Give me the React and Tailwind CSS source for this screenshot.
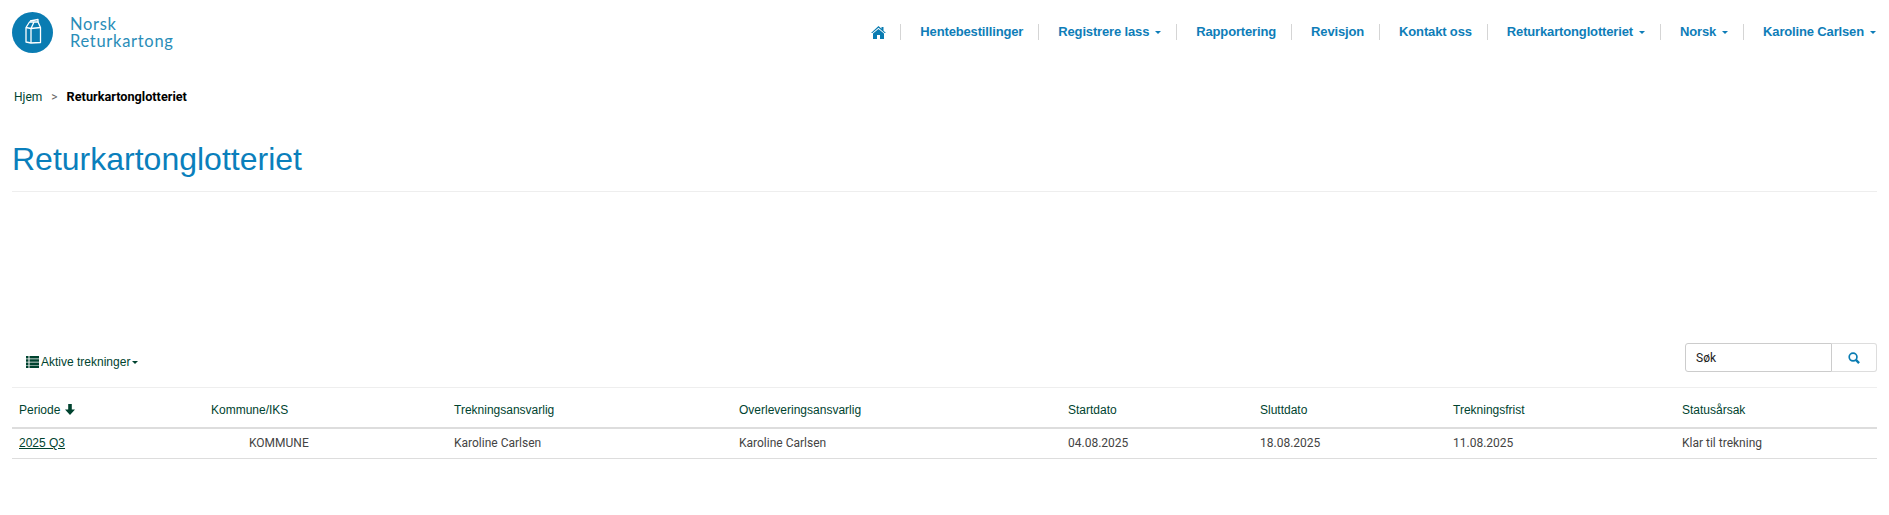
const NAV = [
  { label: 'Hentebestillinger' },
  { label: 'Registrere lass', caret: true },
  { label: 'Rapportering' },
  { label: 'Revisjon' },
  { label: 'Kontakt oss' },
  { label: 'Returkartonglotteriet', caret: true },
  { label: 'Norsk', caret: true },
  { label: 'Karoline Carlsen', caret: true },
]

const COLS = [
  { label: 'Kommune/IKS', w: 'w-[243px]' },
  { label: 'Trekningsansvarlig', w: 'w-[285px]' },
  { label: 'Overleveringsansvarlig', w: 'w-[329px]' },
  { label: 'Startdato', w: 'w-[192px]' },
  { label: 'Sluttdato', w: 'w-[193px]' },
  { label: 'Trekningsfrist', w: 'w-[229px]' },
  { label: 'Statusårsak', w: 'w-[203px]' },
]

const ROW = ['Karoline Carlsen', 'Karoline Carlsen', '04.08.2025', '18.08.2025', '11.08.2025', 'Klar til trekning']

function Caret({ color = 'border-t-[#0e7db8]' }) {
  return <span className={`inline-block w-0 h-0 border-x-[3px] border-x-transparent border-t-[3px] ${color}`} />
}

function Logo() {
  return (
    <svg width="41" height="41" viewBox="0 0 41 41">
      <circle cx="20.5" cy="20.5" r="20.5" fill="#0a7cb2" />
      <g fill="none" stroke="#fff" strokeWidth="1.3" strokeLinejoin="round">
        <path d="M14 15.5 L17.5 10 L26 10 L28.5 15.5 L28.5 30.5 L19 31 L14 30 Z" />
        <path d="M18 9 L26 7.5 L26 10" />
        <path d="M14 15.5 L19 16.5 L28.5 15.5 M19 16.5 L19 31 M19 16.5 L22 10" />
      </g>
    </svg>
  )
}

function HomeIcon() {
  return (
    <svg width="15" height="13" viewBox="0 0 15 13" fill="#0a7cb2">
      <path d="M7.5 0 L10.5 2.8 L10.5 1 L12.5 1 L12.5 4.7 L15 7 L13.6 7 L7.5 1.8 L1.4 7 L0 7 Z" />
      <path d="M7.5 3 L13 7.6 L13 13 L9 13 L9 9 L6 9 L6 13 L2 13 L2 7.6 Z" />
    </svg>
  )
}

function ListIcon() {
  return (
    <svg width="13" height="12" viewBox="0 0 13 12" fill="#00432f">
      <path d="M0 0h2.5v2.5H0zM3.5 0H13v2.5H3.5zM0 3.2h2.5v2.5H0zM3.5 3.2H13v2.5H3.5zM0 6.4h2.5v2.5H0zM3.5 6.4H13v2.5H3.5zM0 9.5h2.5V12H0zM3.5 9.5H13V12H3.5z" />
    </svg>
  )
}

function SortArrow() {
  return (
    <svg width="10" height="11" viewBox="0 0 10 11" fill="#00432f">
      <path d="M3.2 0h3.6v5.5H10L5 11 0 5.5h3.2z" />
    </svg>
  )
}

function SearchIcon() {
  return (
    <svg width="12" height="12" viewBox="0 0 13 13" fill="none" stroke="#0a7cb2" strokeWidth="1.8">
      <circle cx="5.5" cy="5.5" r="4.2" />
      <path d="M8.6 8.6 L12 12" strokeWidth="2.6" />
    </svg>
  )
}

function Navbar() {
  return (
    <header className="flex items-center justify-between h-[64px] pl-3 pr-[13px]">
      <div className="flex items-center gap-[17px]">
        <Logo />
        <div className="font-['Lato',sans-serif] text-[16.5px] leading-[17px] tracking-[0.7px] text-[#2a8db8] pt-[2px]">
          <div>Norsk</div>
          <div>Returkartong</div>
        </div>
      </div>
      <nav className="flex items-center text-[13px] font-bold tracking-[-0.15px] text-[#0e7db8]">
        <span className="mr-[14px]"><HomeIcon /></span>
        {NAV.map((item) => (
          <div key={item.label} className="flex items-center h-4 border-l border-[#d5d5d5] pl-[19px] pr-[15px] last:pr-0 gap-[6px] whitespace-nowrap">
            {item.label}
            {item.caret && <Caret />}
          </div>
        ))}
      </nav>
    </header>
  )
}

export default function App() {
  return (
    <div className="min-h-[515px] bg-white font-['Liberation_Sans',Arial,sans-serif] text-[#00432f]">
      <Navbar />
      <div className="flex items-center h-4 mt-[25px] ml-[14px] text-[12px] font-['Roboto',sans-serif]">
        <span>Hjem</span>
        <span className="mx-[9px] text-[#666]">&gt;</span>
        <span className="font-bold text-[12.7px] text-black">Returkartonglotteriet</span>
      </div>
      <div className="mx-3">
        <h1 className="mt-[34px] pb-[12px] text-[32px] leading-[40px] text-[#0a7fbc] border-b border-[#eee] font-normal">
          Returkartonglotteriet
        </h1>
        <div className="flex items-center justify-between mt-[151px] h-[29px]">
          <div className="flex items-center ml-[14px] pt-[9px] text-[12px]">
            <span className="mr-[2px]"><ListIcon /></span>
            <span className="mr-[2px]">Aktive trekninger</span>
            <Caret color="border-t-[#00432f]" />
          </div>
          <div className="flex w-[192px] h-[29px]">
            <div className="flex items-center w-[147px] pl-[10px] border border-[#ccc] rounded-l-[3px] text-[12px] text-[#222] font-['Roboto',sans-serif]">Søk</div>
            <div className="flex items-center justify-center flex-1 border border-l-0 border-[#ddd] rounded-r-[3px]">
              <SearchIcon />
            </div>
          </div>
        </div>
        <table className="w-full mt-[15px] table-fixed border-t border-[#eee] text-[12px]">
          <thead>
            <tr className="h-[40px] border-b-2 border-[#ddd]">
              <th className="w-[191px] pl-[7px] pr-2 pb-[8px] align-bottom text-left font-normal">
                <span className="flex items-center gap-[5px]">
                  Periode <SortArrow />
                </span>
              </th>
              {COLS.map((c) => (
                <th key={c.label} className={`${c.w} px-2 pb-[8px] align-bottom text-left font-normal`}>{c.label}</th>
              ))}
            </tr>
          </thead>
          <tbody className="font-['Roboto',sans-serif] text-[#444]">
            <tr className="h-[31px] border-b border-[#ddd]">
              <td className="pl-[7px] pr-2 font-['Liberation_Sans',Arial,sans-serif]">
                <a href="#" className="underline text-[#00432f]">2025 Q3</a>
              </td>
              <td className="pl-[46px] pr-2">KOMMUNE</td>
              {ROW.map((v, i) => (
                <td key={i} className="px-2">{v}</td>
              ))}
            </tr>
          </tbody>
        </table>
      </div>
    </div>
  )
}
